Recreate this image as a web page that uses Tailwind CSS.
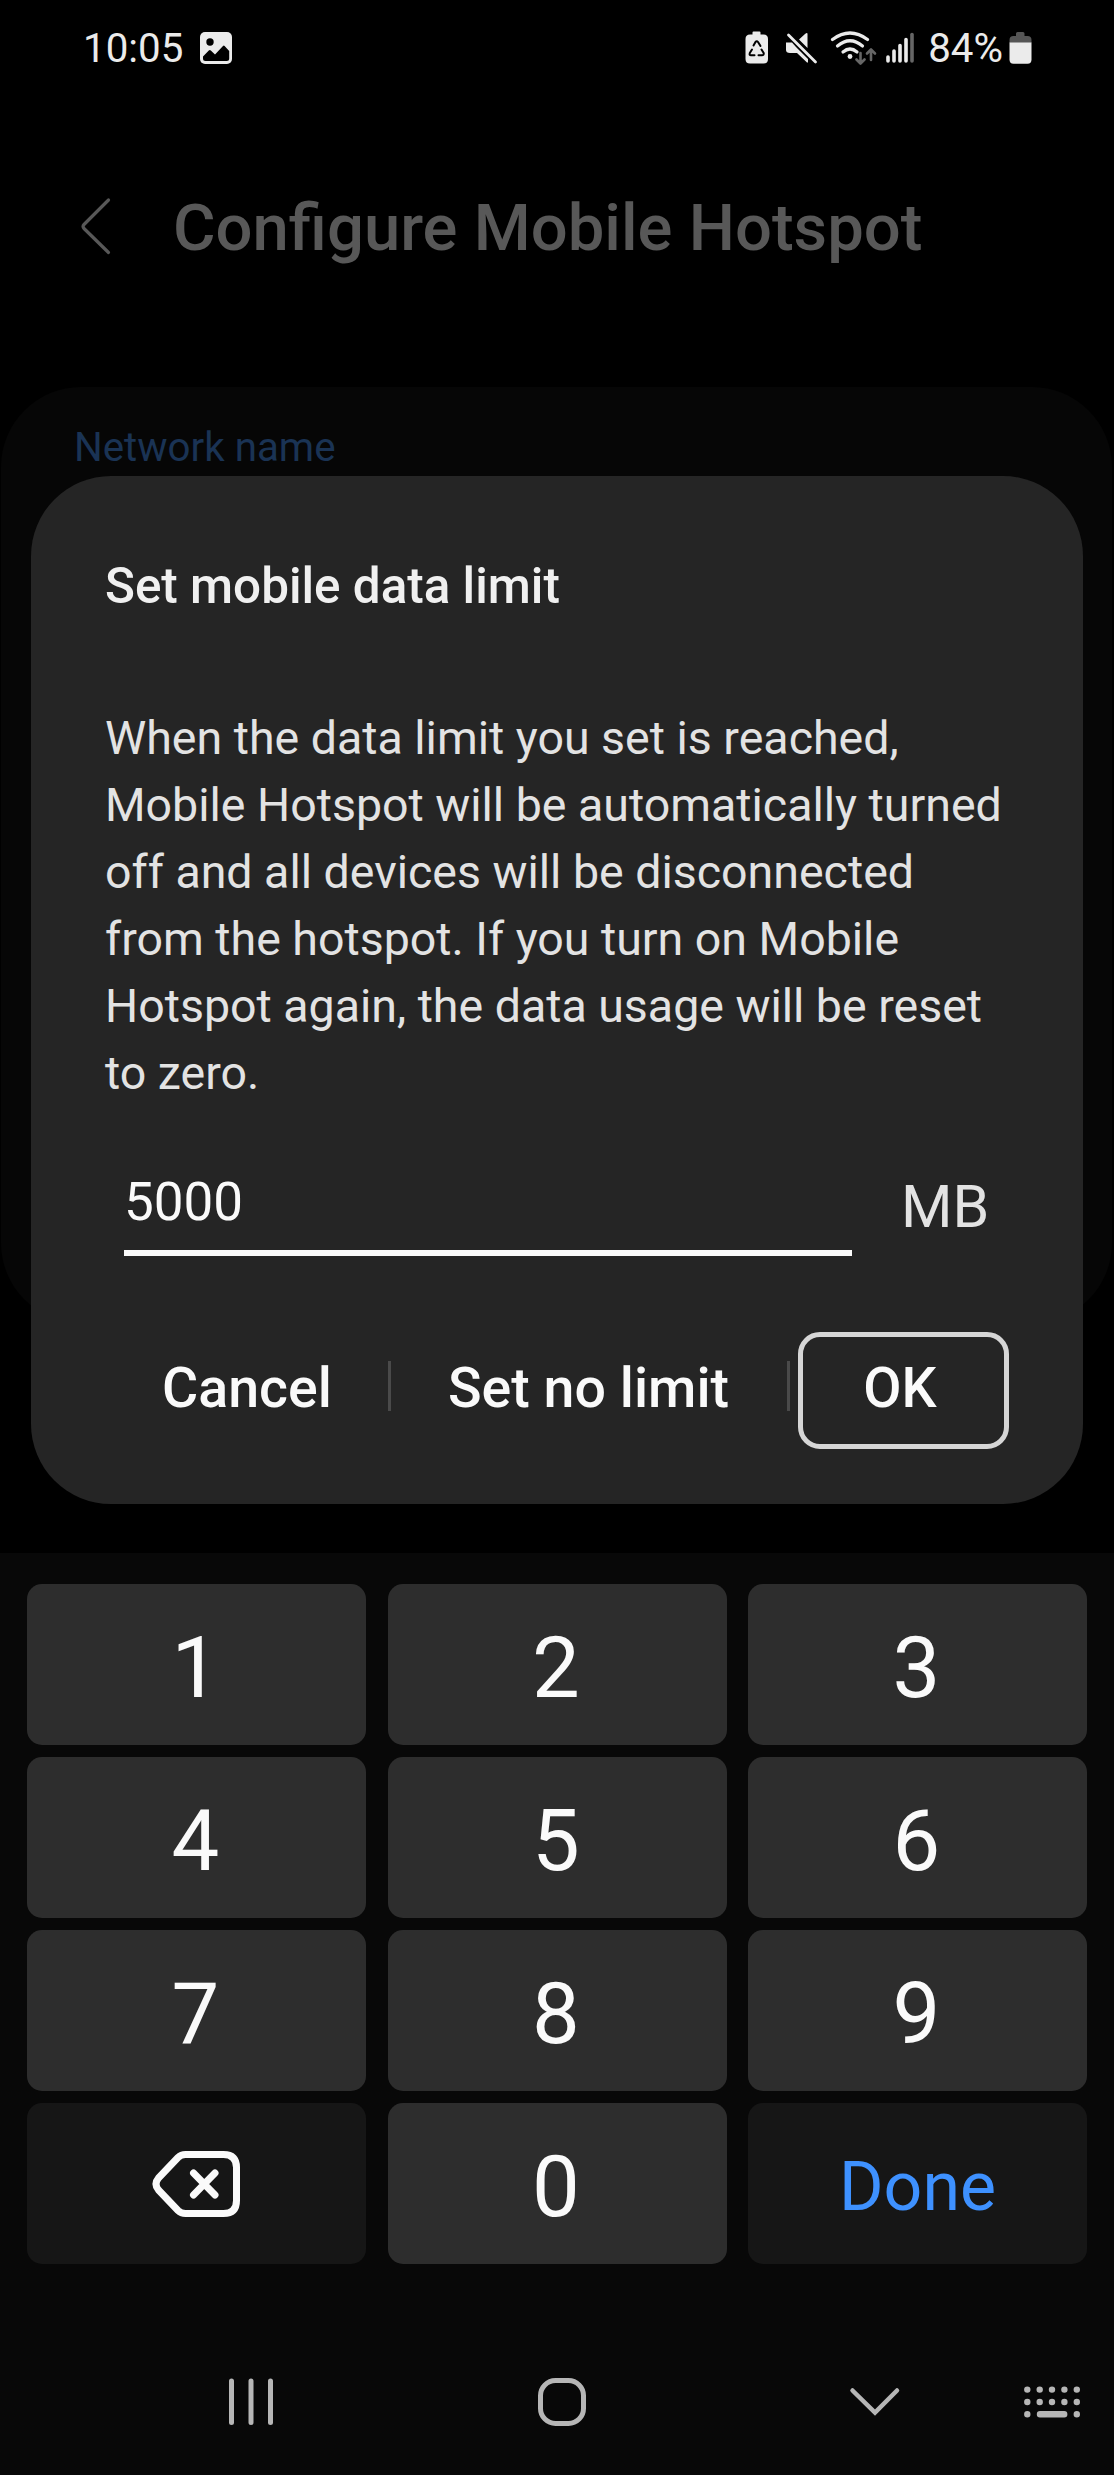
<!DOCTYPE html>
<html lang="en">
<head>
<meta charset="utf-8">
<title>Configure Mobile Hotspot</title>
<script src="https://cdn.jsdelivr.net/npm/@tailwindcss/browser@4"></script>
</head>
<body class="bg-black">
<div class="relative flex h-[2475px] w-[1114px] flex-col overflow-hidden bg-black font-['Roboto',sans-serif] whitespace-nowrap">

  <!-- Status bar -->
  <header class="flex h-24 items-center justify-between pr-[82px] pl-[83px] text-[40.300px] leading-none text-[#ebebeb]">
    <div class="flex items-center gap-[17px]">
      <span class="pt-[2px]">10:05</span>
      <svg class="size-8" viewBox="0 0 32 32"><rect width="32" height="32" rx="5" fill="#ebebeb"/><circle cx="10" cy="10" r="3.7" fill="#000"/><path d="M3 24.500L8.800 18.600q1-1 2 0L15 22.500 23 14q.8-.8 1.600 0L29.200 19V26.500q0 2.500-2.500 2.500H5.500Q3 29 3 26.500Z" fill="#000"/></svg>
    </div>
    <div class="flex items-center">
      <svg class="-mr-[2px] h-[34px] w-[185px]" viewBox="0 0 185 34">
        <path d="M7.500 1.500Q7.500 0.500 8.500 0.500H14.500Q15.500 0.500 15.500 1.500V3.500H18.500Q23 3.500 23 8V28Q23 32.500 18.500 32.500H5Q.5 32.500 .5 28V8Q.5 3.500 5 3.500H7.500Z" fill="#ebebeb"/>
        <g fill="none" stroke="#000" stroke-width="2" stroke-linecap="round" stroke-linejoin="round"><path d="M8.500 14.500L10.500 11Q11.800 9.500 13 11L15.500 15"/><path d="M16.500 18.500L18.700 22Q19 24.300 17 24.300H13.500"/><path d="M9.500 24.300H6Q4 24.300 4.800 22L7 18.500"/></g>
        <path d="M41 11.500H47L51 16 63 28V31.500H62L52 22H45Q41 22 41 19ZM54 8.500L60 3Q62.500 1 62.500 3V17Z" fill="#ebebeb"/>
        <path d="M43.500 4L70.500 31" stroke="#ebebeb" stroke-width="2.800" stroke-linecap="round"/>
        <g fill="none" stroke="#ebebeb" stroke-width="3.200" stroke-linecap="round"><path d="M87.500 8.500Q105 -4.500 122.500 8.500"/><path d="M92.500 15Q105 4.500 117.500 15"/><path d="M98 21Q105 15 112 21"/></g>
        <circle cx="105" cy="25.500" r="2.400" fill="#ebebeb"/>
        <g fill="none" stroke="#666" stroke-width="2.600" stroke-linecap="round" stroke-linejoin="round"><path d="M115.500 22V32M111.500 28.500L115.500 32.500 119.500 28.500"/><path d="M126 29V20M122 22.500L126 18.500 130 22.500"/></g>
        <g stroke="#ebebeb" stroke-width="3.600" stroke-linecap="round"><path d="M143 26V30M149 20V30M155 14.500V30M161 8.500V30"/><path d="M167 3.500V30" stroke="#666"/></g>
      </svg>
      <span class="pt-[2px]">84%</span>
      <svg class="ml-[6px] h-8 w-[23px]" viewBox="0 0 23 32"><path d="M7 1.500Q7 0 8.500 0H14Q15.500 0 15.500 1.500V4H18.500Q22.500 4 22.500 8V11H.5V8Q.5 4 4.500 4H7Z" fill="#555"/><path d="M.5 10.500H22.500V27.500Q22.500 31.700 18.500 31.700H4.500Q.5 31.700 .5 27.500Z" fill="#ebebeb"/></svg>
    </div>
  </header>

  <!-- App bar -->
  <div class="mt-[92px] flex h-[76px] items-center pl-[78px] text-[#585858]">
    <svg class="h-[60px] w-9" viewBox="0 0 36 60"><path d="M30.500 4L6 28.500Q4 30.500 6 32.500L30.500 56.500" fill="none" stroke="currentColor" stroke-width="3.200" stroke-linecap="round"/></svg>
    <h1 class="ml-[59px] pt-[5px] text-[65.200px] leading-none font-medium">Configure Mobile Hotspot</h1>
  </div>

  <!-- Settings card behind the dialog -->
  <section class="mr-0.5 ml-px mt-[123px] h-[936px] rounded-[80px] bg-[#060606] pt-[41px] pl-[73px]">
    <p class="text-[40.300px] leading-[40px] text-[#1a3354]">Network name</p>
  </section>

  <!-- Dialog -->
  <div class="absolute top-[476px] left-[31px] flex h-[1028px] w-[1052px] flex-col rounded-[80px] bg-[#252525] pt-[82px] pr-[74px] pl-[74px] text-[#fafafa]">
    <h2 class="text-[49.400px] leading-[56px] font-medium text-[#f0f0f0]">Set mobile data limit</h2>
    <p class="mt-[91px] text-[46.500px] leading-[67px] text-[#e3e3e3]">When the data limit you set is reached,<br>Mobile Hotspot will be automatically turned<br>off and all devices will be disconnected<br>from the hotspot. If you turn on Mobile<br>Hotspot again, the data usage will be reset<br>to zero.</p>
    <div class="mt-[67px] ml-[19px] flex h-[82px]">
      <div class="w-[728px] border-b-[6px] border-[#fafafa] text-[53px] leading-[56px]">5000</div>
      <div class="ml-[49px] text-[59px] leading-[66px] text-[#e3e3e3]">MB</div>
    </div>
    <div class="mt-[76px] flex h-[117px] items-center text-[55.500px] leading-none font-medium">
      <span class="w-[283px] pb-1 pl-[57px]">Cancel</span>
      <span class="mb-[9px] h-[50px] w-[3px] bg-[#4a4a4a]"></span>
      <span class="w-[396px] pb-1 pl-[57px]">Set no limit</span>
      <span class="mb-[9px] h-[50px] w-[3px] bg-[#4a4a4a]"></span>
      <span class="ml-[8px] flex h-[117px] w-[211px] items-center justify-center rounded-[22px] border-[5px] border-[#d6d6d6] pr-[7px] pb-1">OK</span>
    </div>
  </div>

  <!-- Keyboard -->
  <div class="mt-auto flex h-[922px] flex-col bg-[#080808] pt-[31px]">
    <div class="grid grid-cols-3 gap-x-[21.500px] gap-y-[12px] px-[27px] text-[85px] leading-none text-[#fafafa]">
      <div class="flex h-[161px] items-center justify-center rounded-[15px] bg-[#2d2d2d] pt-2 pr-[2px]">1</div>
      <div class="flex h-[161px] items-center justify-center rounded-[15px] bg-[#2d2d2d] pt-2 pr-[2px]">2</div>
      <div class="flex h-[161px] items-center justify-center rounded-[15px] bg-[#2d2d2d] pt-2 pr-[2px]">3</div>
      <div class="flex h-[161px] items-center justify-center rounded-[15px] bg-[#2d2d2d] pt-2 pr-[2px]">4</div>
      <div class="flex h-[161px] items-center justify-center rounded-[15px] bg-[#2d2d2d] pt-2 pr-[2px]">5</div>
      <div class="flex h-[161px] items-center justify-center rounded-[15px] bg-[#2d2d2d] pt-2 pr-[2px]">6</div>
      <div class="flex h-[161px] items-center justify-center rounded-[15px] bg-[#2d2d2d] pt-2 pr-[2px]">7</div>
      <div class="flex h-[161px] items-center justify-center rounded-[15px] bg-[#2d2d2d] pt-2 pr-[2px]">8</div>
      <div class="flex h-[161px] items-center justify-center rounded-[15px] bg-[#2d2d2d] pt-2 pr-[2px]">9</div>
      <div class="flex h-[161px] items-center justify-center rounded-[15px] bg-[#161616] pr-[2px]">
        <svg class="h-[68px] w-[88px]" viewBox="0 0 88 68" fill="none" stroke="currentColor" stroke-width="7" stroke-linecap="round" stroke-linejoin="round"><path d="M33.500 4.500H71.500Q84.500 4.500 84.500 17.500V50.500Q84.500 63.500 71.500 63.500H33.500Q29 63.500 26 60.500L6.500 40Q1.500 34 6.500 28L26 7.500Q29 4.500 33.500 4.500Z"/><path d="M41.500 23L63 45M63 23L41.500 45"/></svg>
      </div>
      <div class="flex h-[161px] items-center justify-center rounded-[15px] bg-[#2d2d2d] pt-2 pr-[2px]">0</div>
      <div class="flex h-[161px] items-center justify-center rounded-[15px] bg-[#161616] pt-1.5 text-[68px] text-[#3e91ff]">Done</div>
    </div>
    <!-- Navigation bar -->
    <nav class="mt-[113px] flex h-[50px] items-center pl-[229px] text-[#b6b6b6]">
      <svg class="h-12 w-[44px]" viewBox="0 0 44 48" stroke="currentColor" stroke-width="5" stroke-linecap="round"><path d="M2.500 3V44.500M22 3V44.500M41.500 3V44.500"/></svg>
      <svg class="ml-[265px] size-[48px]" viewBox="0 0 48 48"><rect x="2.500" y="2.500" width="43" height="43" rx="15" fill="none" stroke="currentColor" stroke-width="5"/></svg>
      <svg class="ml-[263px] h-[30px] w-[52px]" viewBox="0 0 52 30"><path d="M3.500 3.500L26 25.500 48 3.500" fill="none" stroke="currentColor" stroke-width="4.500" stroke-linecap="round"/></svg>
      <svg class="ml-[123px] h-8 w-14" viewBox="0 0 56 32" stroke="currentColor" stroke-width="6.400" stroke-linecap="round"><path d="M3.300 3.600h0M15.700 3.600h0M28 3.600h0M40.400 3.600h0M52.800 3.600h0M3.300 16h0M15.700 16h0M28 16h0M40.400 16h0M52.800 16h0M3.300 28.300h0M16 28.300H40.200M52.800 28.300h0"/></svg>
    </nav>
  </div>
</div>
</body>
</html>
